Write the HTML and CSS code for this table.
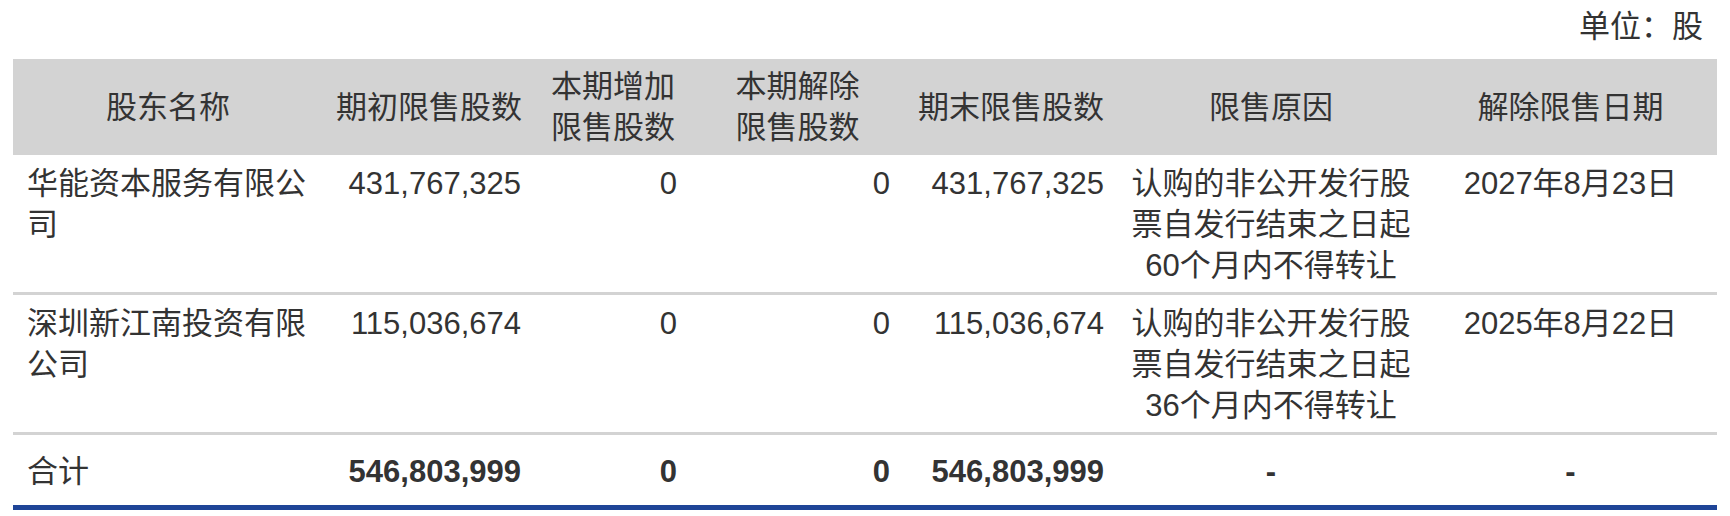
FILE: index.html
```html
<!DOCTYPE html>
<html lang="zh-CN">
<head>
<meta charset="utf-8">
<title>限售股份变动情况</title>
<link rel="stylesheet" href="styles.css">
</head>
<body>
<div class="page">
  <div class="unit">单位：股</div>
  <table class="grid">
    <colgroup>
      <col class="c1"><col class="c2"><col class="c3"><col class="c4"><col class="c5"><col class="c6"><col class="c7">
    </colgroup>
    <thead>
      <tr>
        <th>股东名称</th>
        <th>期初限售股数</th>
        <th>本期增加<br>限售股数</th>
        <th>本期解除<br>限售股数</th>
        <th>期末限售股数</th>
        <th>限售原因</th>
        <th>解除限售日期</th>
      </tr>
    </thead>
    <tbody>
      <tr class="row">
        <td class="name">华能资本服务有限公司</td>
        <td class="num">431,767,325</td>
        <td class="num">0</td>
        <td class="num">0</td>
        <td class="num">431,767,325</td>
        <td class="center">认购的非公开发行股票自发行结束之日起60个月内不得转让</td>
        <td class="center">2027年8月23日</td>
      </tr>
      <tr class="row">
        <td class="name">深圳新江南投资有限公司</td>
        <td class="num">115,036,674</td>
        <td class="num">0</td>
        <td class="num">0</td>
        <td class="num">115,036,674</td>
        <td class="center">认购的非公开发行股票自发行结束之日起36个月内不得转让</td>
        <td class="center">2025年8月22日</td>
      </tr>
      <tr class="row total">
        <td class="name">合计</td>
        <td class="num bold">546,803,999</td>
        <td class="num bold">0</td>
        <td class="num bold">0</td>
        <td class="num bold">546,803,999</td>
        <td class="center bold">-</td>
        <td class="center bold">-</td>
      </tr>
    </tbody>
  </table>
</div>
</body>
</html>
```

FILE: styles.css
```css
html, body {
  margin: 0;
  padding: 0;
  background: #ffffff;
}

body {
  font-family: "Liberation Sans", Arial, "Noto Sans CJK SC", sans-serif;
  font-size: 31px;
  line-height: 41px;
  color: #333333;
}

.page {
  padding: 0 12px 0 13px;
}

.unit {
  text-align: right;
  padding: 6px 15px 0 0;
  height: 59px;
  box-sizing: border-box;
}

.grid {
  width: 1704px;
  border-collapse: collapse;
  table-layout: fixed;
}

.c1 { width: 310px; }
.c2 { width: 212px; }
.c3 { width: 156px; }
.c4 { width: 213px; }
.c5 { width: 214px; }
.c6 { width: 306px; }
.c7 { width: 293px; }

.grid th {
  background: #d3d3d3;
  font-weight: normal;
  height: 96px;
  padding: 0 12px;
  text-align: center;
  vertical-align: middle;
  box-sizing: border-box;
}

.grid td {
  padding: 8px 12px 6px;
  vertical-align: top;
}

.row + .row td {
  border-top: 3px solid #d3d3d3;
}

.total td {
  padding-top: 16px;
  padding-bottom: 13px;
  border-bottom: 5px solid #1f4597;
}

.name {
  text-align: left;
  padding-left: 14px !important;
}

.num {
  text-align: right;
  padding-right: 14px !important;
}

.center {
  text-align: center;
}

.bold {
  font-weight: bold;
}
```
